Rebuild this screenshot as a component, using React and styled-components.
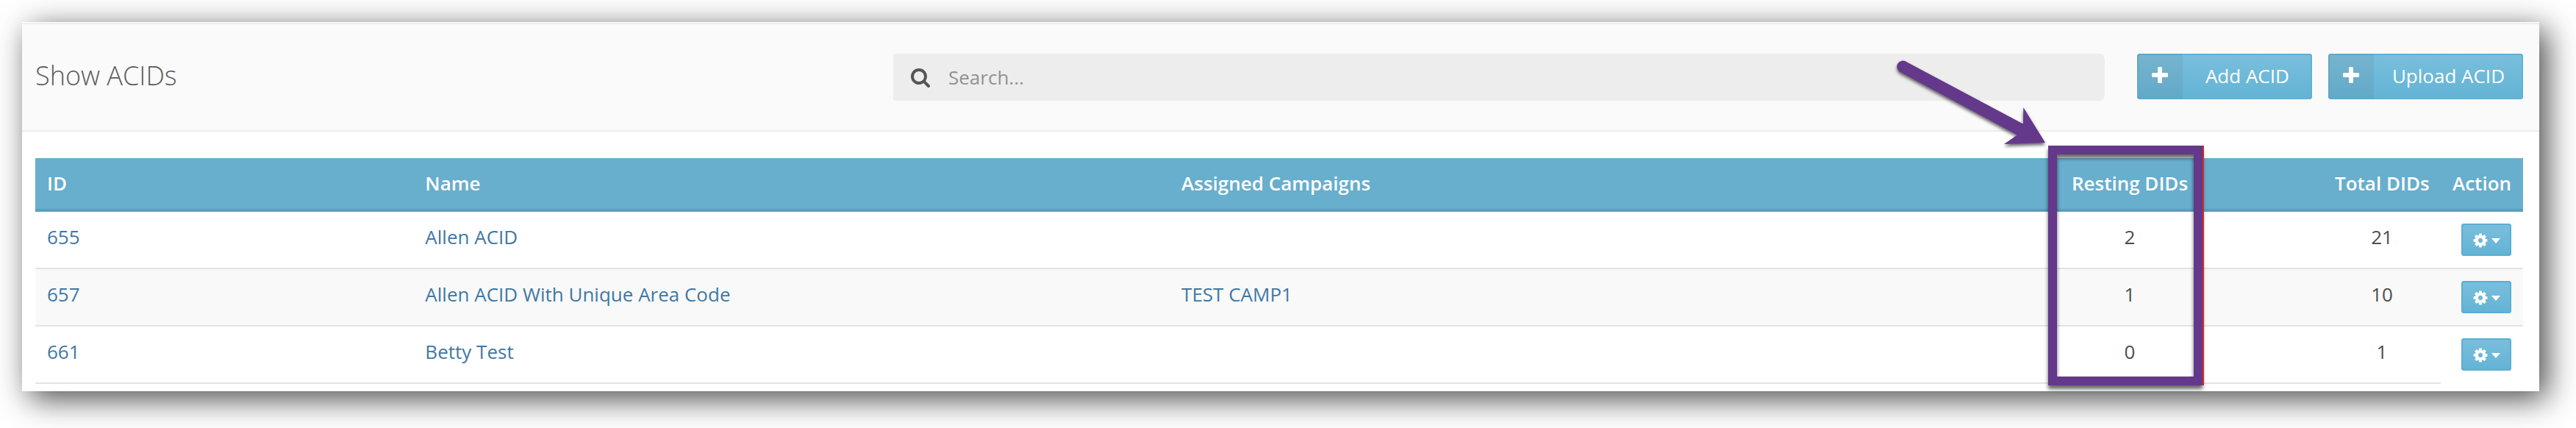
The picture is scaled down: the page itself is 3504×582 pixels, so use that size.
import React, { useState } from "react";
import styled, { createGlobalStyle } from "styled-components";

const acidList = [
    { id: 655, name: "Allen ACID", campaign: "", resting: 2, total: 21 },
    { id: 657, name: "Allen ACID With Unique Area Code", campaign: "TEST CAMP1", resting: 1, total: 10 },
    { id: 661, name: "Betty Test", campaign: "", resting: 0, total: 1 },
];

const iconPaths = {
    search: "M1152 832q0-185-131.5-316.5t-316.5-131.5-316.5 131.5-131.5 316.5 131.5 316.5 316.5 131.5 316.5-131.5 131.5-316.5zm512 832q0 52-38 90t-90 38q-54 0-90-38l-343-342q-179 124-399 124-143 0-273.5-55.5t-225-150-150-225-55.5-273.5 55.5-273.5 150-225 225-150 273.5-55.5 273.5 55.5 225 150 150 225 55.5 273.5q0 220-124 399l343 343q37 37 37 90z",
    plus: "M1600 736v192q0 40-28 68t-68 28h-416v416q0 40-28 68t-68 28h-192q-40 0-68-28t-28-68v-416h-416q-40 0-68-28t-28-68v-192q0-40 28-68t68-28h416v-416q0-40 28-68t68-28h192q40 0 68 28t28 68v416h416q40 0 68 28t28 68z",
    cog: "M1152 896q0-106-75-181t-181-75-181 75-75 181 75 181 181 75 181-75 75-181zm512-109v222q0 12-8 23t-20 13l-185 28q-19 54-39 91 35 50 107 138 10 12 10 25t-9 23q-27 37-99 108t-94 71q-12 0-26-9l-138-108q-44 23-91 38-16 136-29 186-7 28-36 28h-222q-14 0-24.5-8.5t-11.5-21.5l-28-184q-49-16-90-37l-141 107q-10 9-25 9-14 0-25-11-126-114-165-168-7-10-7-23 0-12 8-23 15-21 51-66.5t54-70.5q-27-50-41-99l-183-27q-13-2-21-12.5t-8-23.5v-222q0-12 8-23t19-13l186-28q14-46 39-92-40-57-107-138-10-12-10-24 0-10 9-23 26-36 98.5-107.5t94.5-71.5q13 0 26 10l138 107q44-23 91-38 16-136 29-186 7-28 36-28h222q14 0 24.5 8.5t11.5 21.5l28 184q49 16 90 37l142-107q9-9 24-9 13 0 25 10 129 119 165 170 7 8 7 22 0 12-8 23-15 21-51 66.5t-54 70.5q26 50 41 98l183 28q13 2 21 12.5t8 23.5z",
};

function Icon({ name, size }) {
    return (
        <svg width={size} height={size} viewBox="0 0 1792 1792" fill="currentColor" aria-hidden="true">
            <path d={iconPaths[name]} />
        </svg>
    );
}

function LabeledButton({ children }) {
    return (
        <StyledLabeledButton type="button">
            <ButtonIcon>
                <Icon name="plus" size={28} />
            </ButtonIcon>
            <ButtonText>{children}</ButtonText>
        </StyledLabeledButton>
    );
}

function App() {
    const [keyword, setKeyword] = useState("");

    const handleKeywordChange = (event) => {
        setKeyword(event.target.value);
    };

    return (
        <>
            <GlobalStyle />
            <Panel>
                <PanelHeader>
                    <Title>Show ACIDs</Title>
                    <SearchBox>
                        <Icon name="search" size={28} />
                        <SearchInput
                            type="text"
                            aria-label="Search"
                            placeholder="Search..."
                            value={keyword}
                            onChange={handleKeywordChange}
                        />
                    </SearchBox>
                    <ButtonGroup>
                        <LabeledButton>Add ACID</LabeledButton>
                        <LabeledButton>Upload ACID</LabeledButton>
                    </ButtonGroup>
                </PanelHeader>
                <PanelBody>
                    <AcidTable>
                        <colgroup>
                            <Col $width="15.2%" />
                            <Col $width="30.4%" />
                            <Col />
                            <Col $width="526px" />
                            <Col $width="160px" />
                            <Col $width="112px" />
                        </colgroup>
                        <thead>
                            <tr>
                                <Th>ID</Th>
                                <Th>Name</Th>
                                <Th>Assigned Campaigns</Th>
                                <Th $align="center">Resting DIDs</Th>
                                <Th $align="center">Total DIDs</Th>
                                <Th>Action</Th>
                            </tr>
                        </thead>
                        <tbody>
                            {acidList.map((acid) => (
                                <Row key={acid.id}>
                                    <Td>
                                        <StyledLink href={`#${acid.id}`}>{acid.id}</StyledLink>
                                    </Td>
                                    <Td>
                                        <StyledLink href={`#${acid.id}`}>{acid.name}</StyledLink>
                                    </Td>
                                    <Td>{acid.campaign && <StyledLink href="#campaign">{acid.campaign}</StyledLink>}</Td>
                                    <Td $align="center">{acid.resting}</Td>
                                    <Td $align="center">{acid.total}</Td>
                                    <ActionTd>
                                        <ActionButton type="button" aria-label={`Actions for ${acid.name}`}>
                                            <Icon name="cog" size={22} />
                                            <Caret />
                                        </ActionButton>
                                    </ActionTd>
                                </Row>
                            ))}
                        </tbody>
                    </AcidTable>
                </PanelBody>
                <Highlight />
                <Arrow viewBox="0 0 220 130" aria-hidden="true">
                    <path d="M18 13.5 L176 97.5 L176.300 75 L206 123 L150 125 L168 112.500 L9 27 A8.200 8.200 0 1 1 18 13.500 Z" />
                </Arrow>
            </Panel>
        </>
    );
}

export default App;

const GlobalStyle = createGlobalStyle`
    * {
        box-sizing: border-box;
    }

    body {
        margin: 0;
        background: #fff;
        color: #4d4d4d;
        font-family: "Open Sans", "Noto Sans", sans-serif;
        font-size: 26px;
        line-height: 37px;
    }

    button,
    input {
        font: inherit;
    }
`;

const Panel = styled.div`
    position: relative;
    margin: 30px 50px 50px 30px;
    padding-top: 1px;
    background: #fff;
    box-shadow: 10px 10px 40px rgba(0, 0, 0, 0.72);
`;

const PanelHeader = styled.header`
    display: flex;
    align-items: flex-start;
    padding: 40px 22px 40px 18px;
    background: #fafafa;
    border-top: 2px solid #eee;
    border-bottom: 2px solid #eee;
`;

const Title = styled.h1`
    flex: 0 1 1167px;
    margin: 0;
    color: #5c5c5c;
    font-size: 36px;
    font-weight: 300;
    line-height: 60px;
`;

const SearchBox = styled.label`
    flex: 1;
    display: flex;
    align-items: center;
    gap: 23px;
    height: 64px;
    padding: 0 24px;
    background: #ededed;
    border-radius: 4px 8px 8px 4px;
    color: #555;
`;

const SearchInput = styled.input`
    flex: 1;
    min-width: 0;
    padding: 0;
    border: 0;
    outline: 0;
    background: none;
    color: #555;

    &::placeholder {
        color: #929292;
        opacity: 1;
    }
`;

const ButtonGroup = styled.div`
    display: flex;
    gap: 22px;
    margin-left: 44px;
`;

const StyledLabeledButton = styled.button`
    display: flex;
    min-width: 238px;
    height: 62px;
    padding: 0;
    overflow: hidden;
    border: 0;
    border-radius: 4px;
    background: linear-gradient(#7abfdc, #63b3d5);
    box-shadow: inset 0 0 0 2px #5fb1d5;
    color: #fff;
`;

const ButtonIcon = styled.span`
    display: flex;
    align-items: center;
    justify-content: center;
    width: 62px;
    height: 62px;
    padding-bottom: 2px;
    background: rgba(85, 85, 85, 0.1);
`;

const ButtonText = styled.span`
    flex: 1;
    padding: 0 25px;
    line-height: 60px;
    text-align: center;
    white-space: nowrap;
`;

const PanelBody = styled.div`
    padding: 36px 22px 10px 18px;
`;

const AcidTable = styled.table`
    width: 100%;
    table-layout: fixed;
    border-collapse: separate;
    border-spacing: 0;
`;

const Col = styled.col`
    width: ${({ $width }) => $width || "auto"};
`;

const Th = styled.th`
    padding: 16px;
    background: #68aecd;
    border-bottom: 4px solid #5b9fbf;
    color: #fff;
    font-weight: 600;
    text-align: ${({ $align }) => $align || "left"};
    white-space: nowrap;
`;

const Td = styled.td`
    padding: 16px;
    border-bottom: 2px solid #e3e3e3;
    text-align: ${({ $align }) => $align || "left"};
    vertical-align: top;
`;

const ActionTd = styled(Td)`
    line-height: 0;
    text-align: right;
`;

const Row = styled.tr`
    &:nth-child(even) {
        background: #f9f9f9;
    }

    &:last-child ${ActionTd} {
        border-bottom-color: transparent;
    }
`;

const StyledLink = styled.a`
    color: #3f78a4;
    text-decoration: none;
`;

const ActionButton = styled.button`
    display: inline-flex;
    align-items: center;
    justify-content: center;
    gap: 4px;
    width: 68px;
    height: 44px;
    padding: 2px 0 0;
    border: 0;
    border-radius: 4px;
    background: linear-gradient(#7abfdc, #63b3d5);
    box-shadow: inset 0 0 0 2px #5aaed4;
    color: #fff;
    vertical-align: top;
`;

const Caret = styled.span`
    border: 6px solid transparent;
    border-top: 7px solid #fff;
    border-bottom: 0;
`;

/* frame around the Resting DIDs column */
const Highlight = styled.div`
    position: absolute;
    top: 168px;
    right: 458px;
    width: 210px;
    height: 326px;
    border: 12px solid #64388a;
    box-shadow: 2px 0 0 #d03020, 0 5px 5px rgba(0, 0, 0, 0.6), inset 0 5px 5px rgba(0, 0, 0, 0.6);
`;

const Arrow = styled.svg`
    position: absolute;
    top: 41px;
    right: 658px;
    width: 220px;
    height: 130px;
    fill: #64388a;
    filter: drop-shadow(0 3px 2px rgba(0, 0, 0, 0.6));
`;
